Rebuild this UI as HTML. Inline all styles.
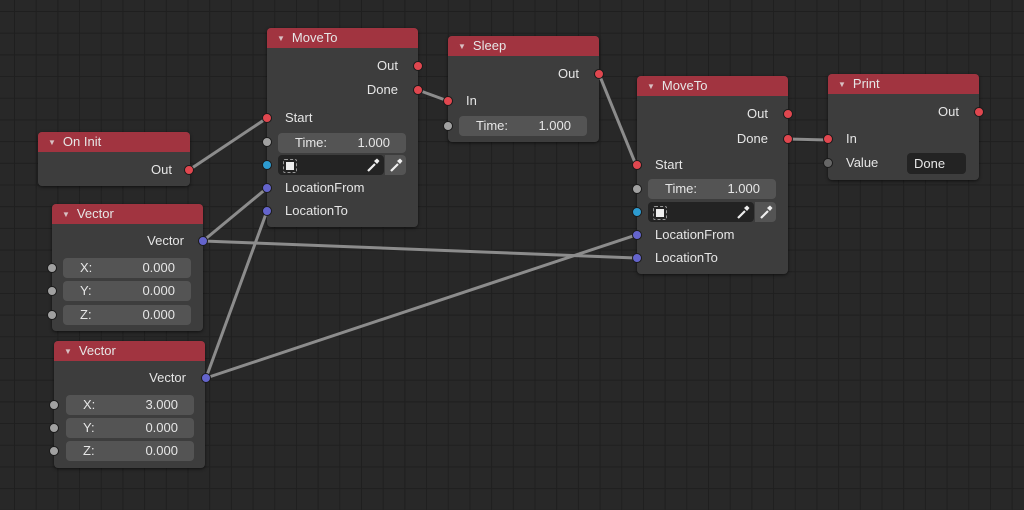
<!DOCTYPE html>
<html><head><meta charset="utf-8"><style>
body{margin:0;width:1024px;height:510px;overflow:hidden;background:#282828;
background-image:linear-gradient(#1f1f1f 1px,transparent 1px),linear-gradient(90deg,#1f1f1f 1px,transparent 1px);
background-size:21.7px 21.7px;background-position:14px 11px;font-family:"Liberation Sans",sans-serif;font-size:13px;color:#e6e6e6;position:relative}
.n{position:absolute;background:#3d3d3d;border-radius:4px;box-shadow:0 1px 3px rgba(0,0,0,.6)}
.h{position:absolute;left:0;right:0;top:0;height:20px;background:#a13440;border-radius:4px 4px 0 0;line-height:20px;padding-left:10px;box-sizing:border-box}
.h:before{content:"▼";font-size:8px;color:#d8c0c3;margin-right:7px;vertical-align:1px}
.t{position:absolute;height:16px;line-height:16px;white-space:nowrap}
.r{text-align:right}
.f{position:absolute;height:20px;background:#545454;border-radius:4px;line-height:20px}
.f span{position:absolute}
.s{position:absolute;width:8px;height:8px;border-radius:50%;border:1px solid #1a1a1a;margin:-5px 0 0 -5px;z-index:3}
.red{background:#e0474f}.gr{background:#a1a1a1}.bl{background:#2d9bd0}.pu{background:#6464cc}.dg{background:#666}
svg{position:absolute;left:0;top:0;z-index:2}
.n{z-index:1}
.cf{position:absolute;height:20px;background:#232323;border-radius:4px}
.ed{position:absolute;width:16px;height:16px}
</style></head><body>
<svg width="1024" height="510"><g stroke="#8c8c8c" stroke-width="3" fill="none">
<line x1="189" y1="170" x2="267" y2="118"/>
<line x1="418" y1="90" x2="448" y2="101"/>
<line x1="599" y1="74" x2="636" y2="165"/>
<line x1="788" y1="139" x2="827" y2="140"/>
<line x1="203" y1="241" x2="267" y2="188"/>
<line x1="203" y1="241" x2="636" y2="258"/>
<line x1="206" y1="378" x2="267" y2="211"/>
<line x1="206" y1="378" x2="636" y2="235"/>
</g></svg>

<!-- On Init -->
<div class="n" style="left:38px;top:132px;width:152px;height:54px"><div class="h">On Init</div>
<div class="t r" style="right:18px;top:30px">Out</div></div>
<div class="s red" style="left:189px;top:170px"></div>

<!-- Vector1 -->
<div class="n" style="left:52px;top:204px;width:151px;height:127px"><div class="h">Vector</div>
<div class="t r" style="right:19px;top:29px">Vector</div>
<div class="f" style="left:11px;top:54px;width:128px"><span style="left:17px">X:</span><span style="right:16px">0.000</span></div>
<div class="f" style="left:11px;top:77px;width:128px"><span style="left:17px">Y:</span><span style="right:16px">0.000</span></div>
<div class="f" style="left:11px;top:101px;width:128px"><span style="left:17px">Z:</span><span style="right:16px">0.000</span></div></div>
<div class="s pu" style="left:203px;top:241px"></div>
<div class="s gr" style="left:52px;top:268px"></div><div class="s gr" style="left:52px;top:291px"></div><div class="s gr" style="left:52px;top:315px"></div>

<!-- Vector2 -->
<div class="n" style="left:54px;top:341px;width:151px;height:127px"><div class="h">Vector</div>
<div class="t r" style="right:19px;top:29px">Vector</div>
<div class="f" style="left:12px;top:54px;width:128px"><span style="left:17px">X:</span><span style="right:16px">3.000</span></div>
<div class="f" style="left:12px;top:77px;width:128px"><span style="left:17px">Y:</span><span style="right:16px">0.000</span></div>
<div class="f" style="left:12px;top:100px;width:128px"><span style="left:17px">Z:</span><span style="right:16px">0.000</span></div></div>
<div class="s pu" style="left:206px;top:378px"></div>
<div class="s gr" style="left:54px;top:405px"></div><div class="s gr" style="left:54px;top:428px"></div><div class="s gr" style="left:54px;top:451px"></div>

<!-- MoveTo1 -->
<div class="n" style="left:267px;top:28px;width:151px;height:199px"><div class="h">MoveTo</div>
<div class="t r" style="right:20px;top:30px">Out</div>
<div class="t r" style="right:20px;top:54px">Done</div>
<div class="t" style="left:18px;top:82px">Start</div>
<div class="f" style="left:11px;top:105px;width:128px"><span style="left:17px">Time:</span><span style="right:16px">1.000</span></div>
<div class="cf" style="left:11px;top:127px;width:106px"><div style="position:absolute;left:5px;top:4px;width:12px;height:12px;border:1px dashed #999;border-radius:2px"><div style="margin:2px;width:8px;height:8px;background:#eee"></div></div>
<svg class="ed" style="left:87px;top:2px" viewBox="0 0 16 16"><path d="M3 14 L10 7" stroke="#eee" stroke-width="2.2" fill="none"/><path d="M9 4 L12 1.5 L14.5 4 L12 7 Z" fill="#eee"/></svg></div>
<div style="position:absolute;left:118px;top:127px;width:21px;height:20px;background:#545454;border-radius:0 4px 4px 0"><svg class="ed" style="left:3px;top:2px" viewBox="0 0 16 16"><path d="M3 14 L10 7" stroke="#eee" stroke-width="2.2" fill="none"/><path d="M9 4 L12 1.5 L14.5 4 L12 7 Z" fill="#eee"/></svg></div>
<div class="t" style="left:18px;top:152px">LocationFrom</div>
<div class="t" style="left:18px;top:175px">LocationTo</div></div>
<div class="s red" style="left:418px;top:66px"></div><div class="s red" style="left:418px;top:90px"></div>
<div class="s red" style="left:267px;top:118px"></div><div class="s gr" style="left:267px;top:142px"></div>
<div class="s bl" style="left:267px;top:165px"></div><div class="s pu" style="left:267px;top:188px"></div><div class="s pu" style="left:267px;top:211px"></div>

<!-- Sleep -->
<div class="n" style="left:448px;top:36px;width:151px;height:106px"><div class="h">Sleep</div>
<div class="t r" style="right:20px;top:30px">Out</div>
<div class="t" style="left:18px;top:57px">In</div>
<div class="f" style="left:11px;top:80px;width:128px"><span style="left:17px">Time:</span><span style="right:16px">1.000</span></div></div>
<div class="s red" style="left:599px;top:74px"></div><div class="s red" style="left:448px;top:101px"></div><div class="s gr" style="left:448px;top:126px"></div>

<!-- MoveTo2 -->
<div class="n" style="left:637px;top:76px;width:151px;height:198px"><div class="h">MoveTo</div>
<div class="t r" style="right:20px;top:30px">Out</div>
<div class="t r" style="right:20px;top:55px">Done</div>
<div class="t" style="left:18px;top:81px">Start</div>
<div class="f" style="left:11px;top:103px;width:128px"><span style="left:17px">Time:</span><span style="right:16px">1.000</span></div>
<div class="cf" style="left:11px;top:126px;width:106px"><div style="position:absolute;left:5px;top:4px;width:12px;height:12px;border:1px dashed #999;border-radius:2px"><div style="margin:2px;width:8px;height:8px;background:#eee"></div></div>
<svg class="ed" style="left:87px;top:2px" viewBox="0 0 16 16"><path d="M3 14 L10 7" stroke="#eee" stroke-width="2.2" fill="none"/><path d="M9 4 L12 1.5 L14.5 4 L12 7 Z" fill="#eee"/></svg></div>
<div style="position:absolute;left:118px;top:126px;width:21px;height:20px;background:#545454;border-radius:0 4px 4px 0"><svg class="ed" style="left:3px;top:2px" viewBox="0 0 16 16"><path d="M3 14 L10 7" stroke="#eee" stroke-width="2.2" fill="none"/><path d="M9 4 L12 1.5 L14.5 4 L12 7 Z" fill="#eee"/></svg></div>
<div class="t" style="left:18px;top:151px">LocationFrom</div>
<div class="t" style="left:18px;top:174px">LocationTo</div></div>
<div class="s red" style="left:788px;top:114px"></div><div class="s red" style="left:788px;top:139px"></div>
<div class="s red" style="left:637px;top:165px"></div><div class="s gr" style="left:637px;top:189px"></div>
<div class="s bl" style="left:637px;top:212px"></div><div class="s pu" style="left:637px;top:235px"></div><div class="s pu" style="left:637px;top:258px"></div>

<!-- Print -->
<div class="n" style="left:828px;top:74px;width:151px;height:106px"><div class="h">Print</div>
<div class="t r" style="right:20px;top:30px">Out</div>
<div class="t" style="left:18px;top:57px">In</div>
<div class="t" style="left:18px;top:81px">Value</div>
<div style="position:absolute;left:79px;top:79px;width:59px;height:21px;background:#232323;border-radius:4px;line-height:21px;padding-left:7px;box-sizing:border-box">Done</div></div>
<div class="s red" style="left:979px;top:112px"></div><div class="s red" style="left:828px;top:139px"></div><div class="s dg" style="left:828px;top:163px"></div>
</body></html>
